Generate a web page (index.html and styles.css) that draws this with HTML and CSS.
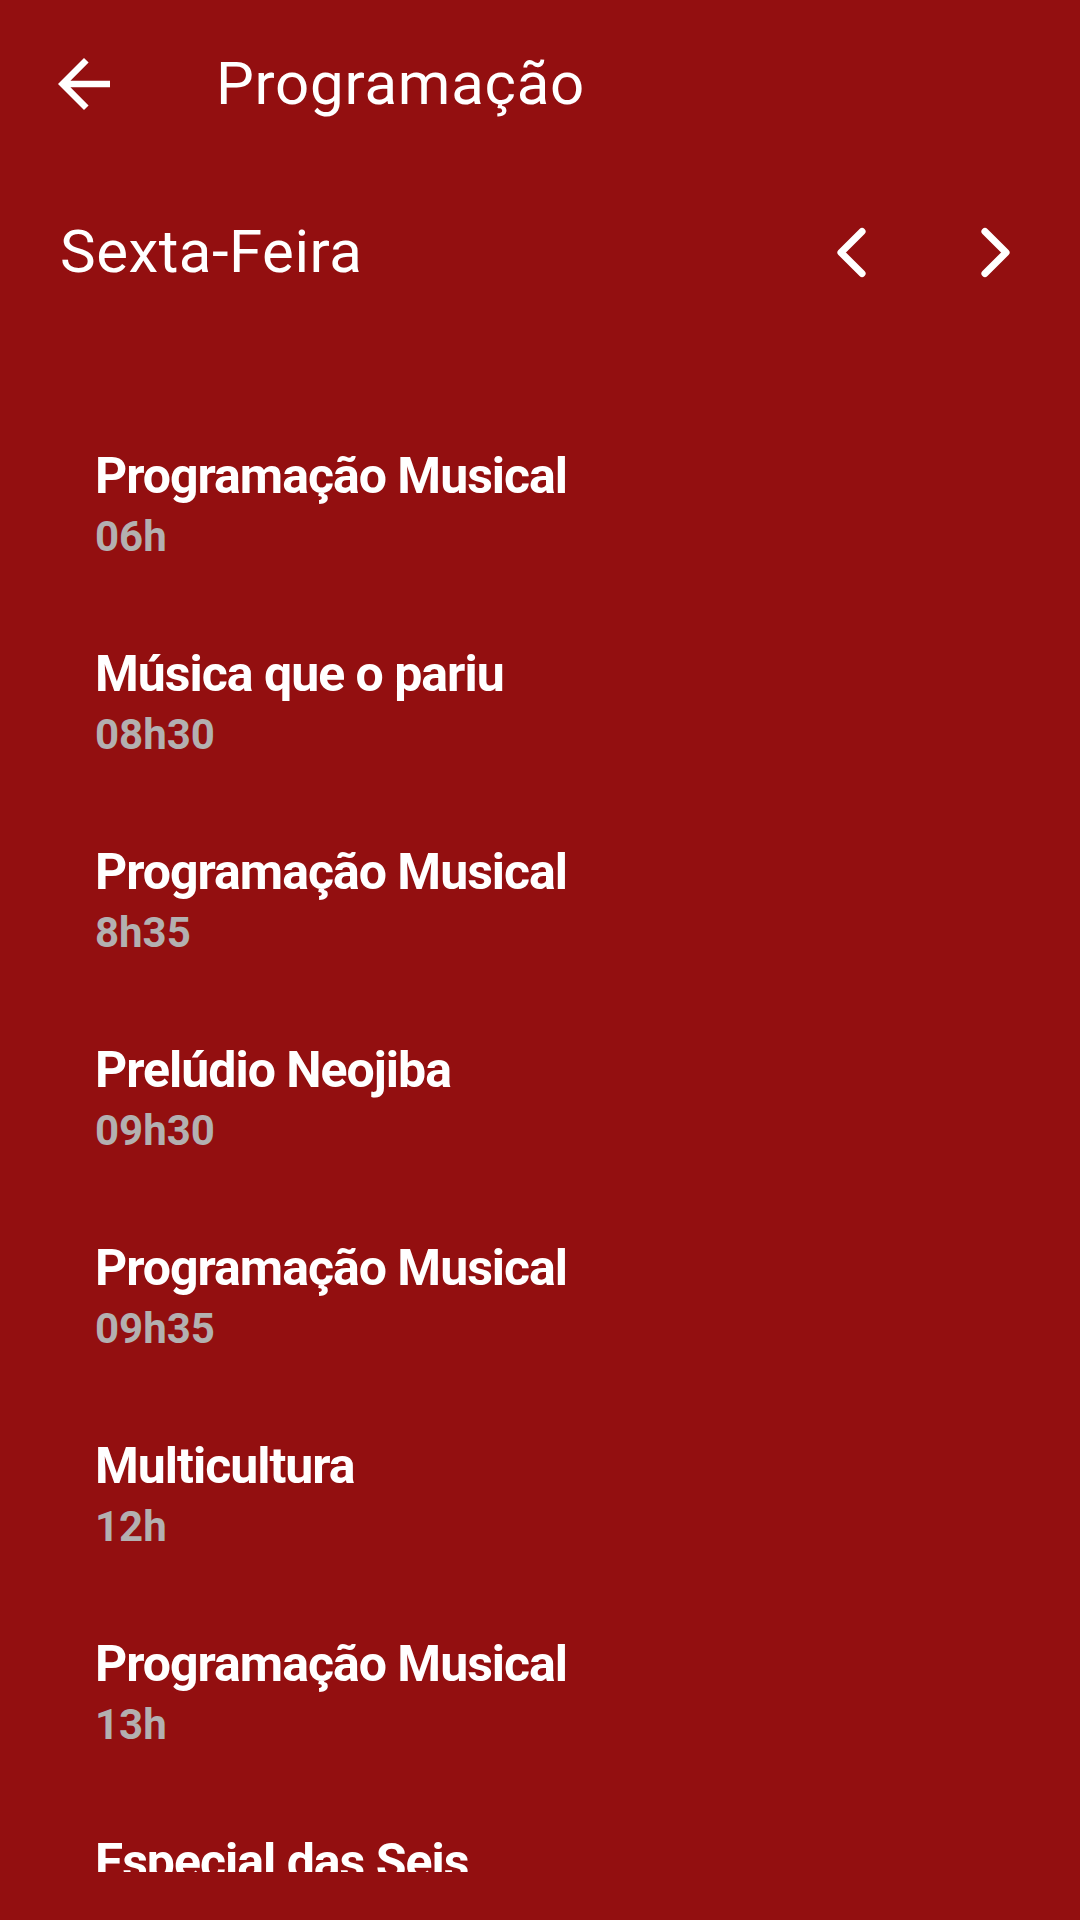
FILE: index.html
```html
<!DOCTYPE html>
<html lang="pt-BR">
<head>
    <meta charset="UTF-8">
    <meta name="viewport" content="width=device-width, initial-scale=1.0">
    <title>Programação</title>
    <link rel="stylesheet" href="styles.css">
</head>
<body>
    <div class="screen">
        <header class="toolbar">
            <div class="nav-button">
                <svg viewBox="0 0 24 24" width="78" height="78">
                    <path fill="#fff" d="M20 11H7.83l5.59-5.59L12 4l-8 8 8 8 1.41-1.41L7.83 13H20v-2z"/>
                </svg>
            </div>
            <h1 class="toolbar-title">Programação</h1>
        </header>

        <div class="day-row">
            <div class="day-name">Sexta-Feira</div>
            <div class="day-nav">
                <svg class="chevron" viewBox="0 0 512 512" width="75" height="75">
                    <path d="M328 112L184 256l144 144"/>
                </svg>
                <svg class="chevron" viewBox="0 0 512 512" width="75" height="75">
                    <path d="M184 112l144 144-144 144"/>
                </svg>
            </div>
        </div>

        <div class="schedule">
            <div class="show">
                <div class="show-title">Programação Musical</div>
                <div class="show-time">06h</div>
            </div>
            <div class="show">
                <div class="show-title">Música que o pariu</div>
                <div class="show-time">08h30</div>
            </div>
            <div class="show">
                <div class="show-title">Programação Musical</div>
                <div class="show-time">8h35</div>
            </div>
            <div class="show">
                <div class="show-title">Prelúdio Neojiba</div>
                <div class="show-time">09h30</div>
            </div>
            <div class="show">
                <div class="show-title">Programação Musical</div>
                <div class="show-time">09h35</div>
            </div>
            <div class="show">
                <div class="show-title">Multicultura</div>
                <div class="show-time">12h</div>
            </div>
            <div class="show">
                <div class="show-title">Programação Musical</div>
                <div class="show-time">13h</div>
            </div>
            <div class="show">
                <div class="show-title">Especial das Seis</div>
                <div class="show-time">18h</div>
            </div>
        </div>
    </div>
</body>
</html>
```
FILE: styles.css
```css
body {
    margin: 0;
    background-color: #930f10;
    font-family: 'Roboto', 'Noto Sans', sans-serif;
    color: #fff;
}

.screen {
    width: 1080px;
    height: 1920px;
    overflow: hidden;
}

.toolbar {
    height: 168px;
    display: flex;
    align-items: center;
}

.nav-button {
    width: 168px;
    height: 168px;
    display: flex;
    align-items: center;
    justify-content: center;
    margin-right: 48px;
}

.toolbar-title {
    margin: 0;
    font-size: 60px;
    font-weight: 400;
    line-height: 70px;
    letter-spacing: 0.75px;
}

.day-row {
    height: 168px;
    display: flex;
    align-items: center;
    justify-content: space-between;
    padding: 0 47px 0 60px;
}

.day-name {
    font-size: 60px;
    line-height: 70px;
    letter-spacing: 0.5px;
}

.day-nav {
    display: flex;
    gap: 69px;
}

.chevron path {
    fill: none;
    stroke: #fff;
    stroke-width: 48;
    stroke-linecap: round;
    stroke-linejoin: round;
}

.schedule {
    height: 1536px;
    overflow: hidden;
    padding-top: 72px;
    box-sizing: border-box;
}

.show {
    padding: 38px 0 38px 95px;
}

.show-title {
    font-size: 50px;
    font-weight: 700;
    line-height: 60px;
    letter-spacing: -1px;
}

.show-time {
    font-size: 42px;
    font-weight: 700;
    line-height: 62px;
    color: #b3b0b0;
}
```
